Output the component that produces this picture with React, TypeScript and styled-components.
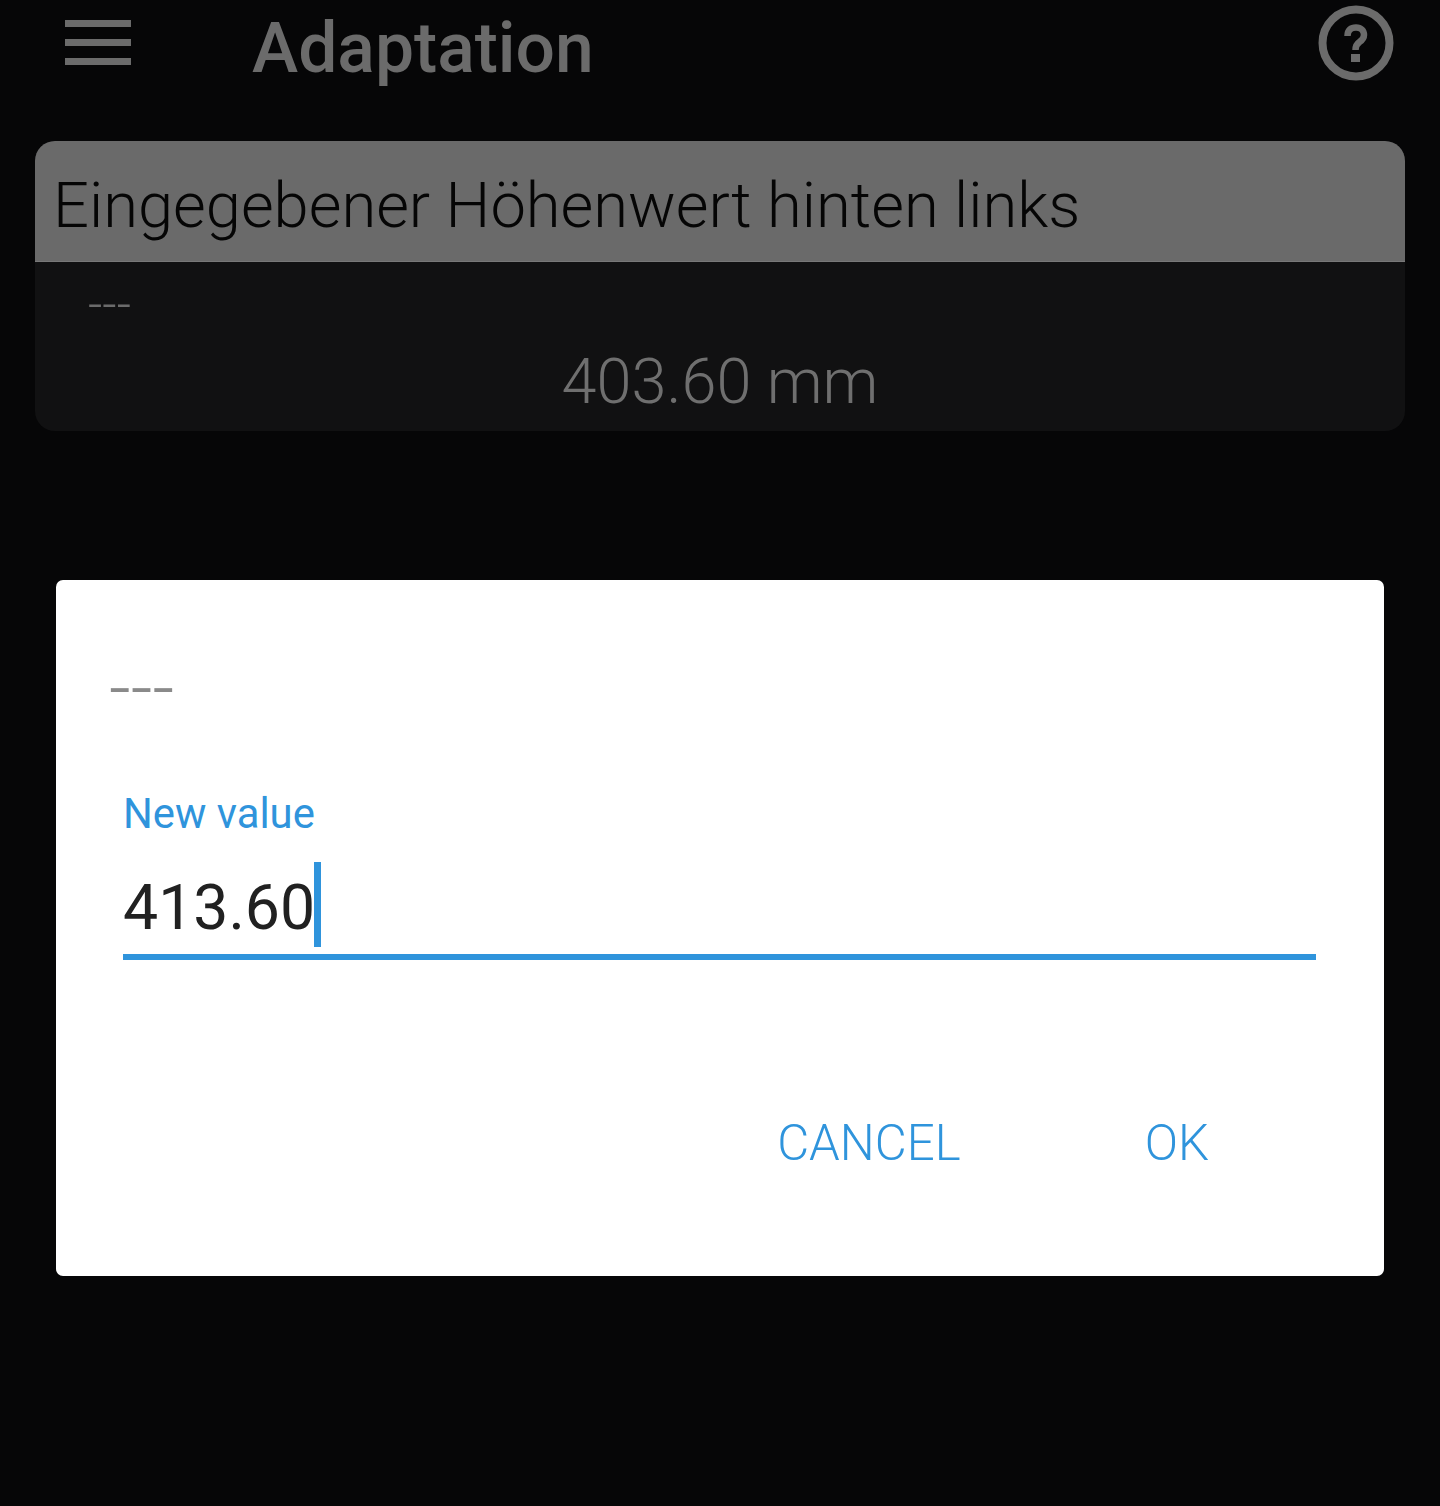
import React from 'react';
import styled, { createGlobalStyle } from 'styled-components';

const GlobalStyle = createGlobalStyle`
  html, body {
    margin: 0;
    padding: 0;
    background: #060607;
  }
  * {
    box-sizing: border-box;
  }
`;

const Page = styled.div`
  width: 1440px;
  height: 1506px;
  background: #060607;
  font-family: Roboto, "Liberation Sans", sans-serif;
  overflow: hidden;
`;

const Toolbar = styled.header`
  display: flex;
  align-items: center;
  height: 141px;
  padding: 0 46px 0 65px;
`;

const MenuIcon = styled.svg`
  width: 66px;
  height: 45px;
  margin: -56px 0 0 0;
  flex: none;
`;

const Title = styled.h1`
  flex: 1;
  margin: -45px 0 0 121px;
  font-size: 69.6px;
  line-height: 78px;
  font-weight: 500;
  color: #6b6b6b;
`;

const HelpIcon = styled.svg`
  width: 76px;
  height: 76px;
  margin-top: -55px;
  flex: none;
`;

const Card = styled.section`
  margin: 0 35px;
  height: 290px;
  border-radius: 20px;
  background: #111112;
  overflow: hidden;
`;

const CardHeader = styled.div`
  display: flex;
  align-items: center;
  height: 121px;
  padding: 8px 0 0 18px;
  background: #6a6a6a;
  border-bottom: 1px solid #787878;
  font-size: 63.25px;
  font-weight: 300;
  color: #050505;
`;

const CardBody = styled.div`
  display: flex;
  flex-direction: column;
  padding: 17px 53px 0;
  color: #6b6b6b;
`;

const Dashes = styled.div<{ $size: number; $color: string }>`
  font-size: ${p => p.$size}px;
  line-height: 1;
  font-weight: 300;
  color: ${p => p.$color};
`;

const CardValue = styled.div`
  margin-top: 15px;
  text-align: center;
  font-size: 63px;
  line-height: 75px;
  font-weight: 300;
  color: #6f6f6f;
`;

const Dialog = styled.div`
  display: flex;
  flex-direction: column;
  margin: 149px 56px 0;
  height: 696px;
  padding: 70px 68px 0 53px;
  background: #fff;
  border-radius: 7px;
`;

const Field = styled.div`
  display: flex;
  flex-direction: column;
  margin: 64px 0 0 14px;
`;

const FieldLabel = styled.label`
  font-size: 41.8px;
  line-height: 48px;
  color: #2f94dc;
`;

const FieldInput = styled.div`
  display: flex;
  align-items: center;
  height: 97px;
  margin-top: 25px;
  padding-bottom: 2px;
  border-bottom: 6px solid #2f94dc;
  font-size: 62.5px;
  color: #212121;
`;

const Caret = styled.span`
  width: 7px;
  height: 85px;
  margin: -6px 0 0 -1px;
  background: #2f94dc;
`;

const Actions = styled.div`
  display: flex;
  justify-content: flex-end;
  gap: 184px;
  margin-top: 154px;
  padding-right: 107px;
`;

const ActionButton = styled.button`
  padding: 0;
  border: 0;
  background: none;
  font-family: inherit;
  font-size: 49.2px;
  line-height: 59px;
  font-weight: 300;
  color: #2f94dc;
`;

export default function App() {
  return (
    <Page>
      <GlobalStyle />
      <Toolbar>
        <MenuIcon viewBox="0 0 66 45">
          <rect x="0" y="0" width="66" height="7" fill="#6b6b6b" />
          <rect x="0" y="19" width="66" height="7" fill="#6b6b6b" />
          <rect x="0" y="38" width="66" height="7" fill="#6b6b6b" />
        </MenuIcon>
        <Title>Adaptation</Title>
        <HelpIcon viewBox="0 0 76 76">
          <circle cx="38" cy="38" r="33.5" fill="none" stroke="#6b6b6b" strokeWidth="8" />
          <path
            d="M29.5 31c0-6 3.5-8.5 8.5-8.5s8 3 8 7.5c0 3-1.5 5-4.5 7-3 2-4 4-4 8"
            fill="none"
            stroke="#6b6b6b"
            strokeWidth="6.5"
          />
          <rect x="33" y="49" width="9" height="8" fill="#6b6b6b" />
        </HelpIcon>
      </Toolbar>
      <Card>
        <CardHeader>Eingegebener Höhenwert hinten links</CardHeader>
        <CardBody>
          <Dashes $size={50} $color="#6b6b6b">---</Dashes>
          <CardValue>403.60 mm</CardValue>
        </CardBody>
      </Card>
      <Dialog>
        <Dashes $size={76} $color="#8a8a8a">---</Dashes>
        <Field>
          <FieldLabel>New value</FieldLabel>
          <FieldInput>
            413.60
            <Caret />
          </FieldInput>
        </Field>
        <Actions>
          <ActionButton>CANCEL</ActionButton>
          <ActionButton>OK</ActionButton>
        </Actions>
      </Dialog>
    </Page>
  );
}
